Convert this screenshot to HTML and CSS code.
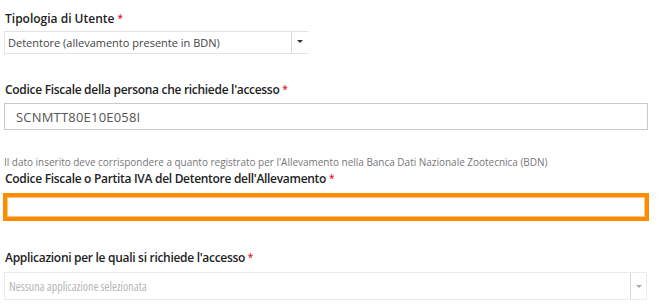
FILE: index.html
```html
<!DOCTYPE html>
<html lang="it">
<head>
<meta charset="utf-8">
<link rel="stylesheet" href="styles.css">
</head>
<body>
<form class="form">
  <div class="group g1">
    <label class="lbl">Tipologia di Utente <span class="req">*</span></label>
    <div class="select small">
      <span class="sel-text">Detentore (allevamento presente in BDN)</span>
      <span class="sel-btn"><span class="caret"></span></span>
    </div>
  </div>
  <div class="group g2">
    <label class="lbl mid">Codice Fiscale della persona che richiede l'accesso <span class="req">*</span></label>
    <div class="input">SCNMTT80E10E058I</div>
  </div>
  <div class="group g3">
    <p class="help">Il dato inserito deve corrispondere a quanto registrato per l'Allevamento nella Banca Dati Nazionale Zootecnica (BDN)</p>
    <label class="lbl narrow">Codice Fiscale o Partita IVA del Detentore dell'Allevamento <span class="req">*</span></label>
    <div class="input focus"></div>
  </div>
  <div class="group g4">
    <label class="lbl narrow">Applicazioni per le quali si richiede l'accesso <span class="req">*</span></label>
    <div class="select big">
      <span class="sel-text ph">Nessuna applicazione selezionata</span>
      <span class="sel-btn"><span class="caret light"></span></span>
    </div>
  </div>
</form>
</body>
</html>
```

FILE: styles.css
```css
html, body {
  margin: 0;
  padding: 0;
  background: #fff;
}
.form {
  display: flex;
  flex-direction: column;
  padding: 11px 0 0 4px;
  width: 647px;
  font-family: "Open Sans", "DejaVu Sans", sans-serif;
  color: #333;
}
.group {
  display: flex;
  flex-direction: column;
}
.lbl {
  font-family: "Open Sans", sans-serif;
  font-weight: 600;
  font-size: 12px;
  line-height: 15px;
  padding-left: 1px;
  color: #222;
}
.lbl.mid {
  letter-spacing: -0.3px;
}
.lbl.narrow {
  font-size: 12px;
  letter-spacing: -0.3px;
  color: #222;
}
.req {
  color: #e02020;
  font-size: 10px;
  vertical-align: top;
  letter-spacing: 0;
}
.g1 .lbl { margin-bottom: 5px; }
.select {
  display: flex;
  align-items: stretch;
  border: 1px solid #e4e4e4;
  background: #fff;
  box-sizing: border-box;
}
.select.small {
  width: 305px;
  height: 23px;
  border-right-color: #fff;
}
.select.big {
  width: 643px;
  height: 28px;
  border-color: #ebebeb;
}
.sel-text {
  flex: 1;
  display: flex;
  align-items: center;
  padding-left: 3px;
  font-size: 11px;
  color: #444;
}
.sel-text.ph {
  font-stretch: 75%;
  color: #b5b5b5;
  font-size: 12px;
  padding-left: 4px;
}
.sel-btn {
  width: 15px;
  border-left: 1px solid #d9d9d9;
  display: flex;
  align-items: center;
  justify-content: center;
}
.small .sel-btn { width: 16px; }
.caret {
  width: 0;
  height: 0;
  border-left: 3px solid transparent;
  border-right: 3px solid transparent;
  border-top: 3px solid #333;
  margin-bottom: 3px;
}
.caret.light { border-top-color: #aaa; margin-bottom: 0; }
.g2 { margin-top: 28px; }
.g2 .lbl { margin-bottom: 6px; }
.input {
  box-sizing: border-box;
  width: 644px;
  height: 27px;
  border: 1px solid #c8c8c8;
  padding-left: 11px;
  display: flex;
  align-items: center;
  font-size: 13px;
  color: #555;
  letter-spacing: 0.2px;
}
.input.focus {
  width: 646px;
  height: 28px;
  margin-left: -1px;
  border: 4px solid #ff8c00;
  box-shadow: inset 0 0 0 1px #ffc680;
}
.g3 { margin-top: 26px; }
.help {
  margin: 0 0 3px 0;
  font-size: 10px;
  color: #777;
  line-height: 12px;
  letter-spacing: -0.02px;
}
.g3 .lbl { margin-bottom: 7px; }
.g4 { margin-top: 29px; }
.g4 .lbl { margin-bottom: 7px; }
```
